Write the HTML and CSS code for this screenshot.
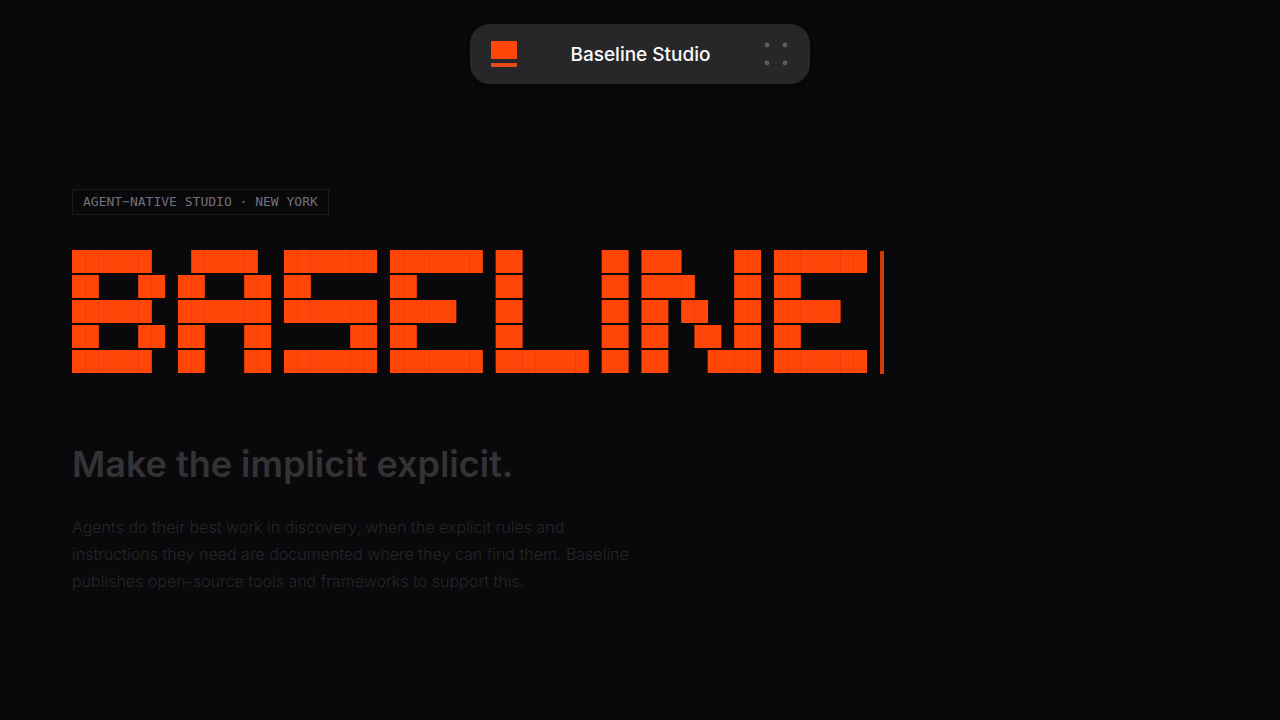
FILE: index.html
```html
<!DOCTYPE html>
<html lang="en">
<head>
    <meta charset="UTF-8">
    <meta name="viewport" content="width=device-width, initial-scale=1.0">
    <title>Baseline Studio</title>
    <link rel="stylesheet" href="styles.css">
</head>
<body>
    <header class="header">
        <nav class="nav">
            <a href="#" class="logo" aria-label="Home">
                <svg width="26" height="26" viewBox="0 0 26 26">
                    <rect width="26" height="18" fill="#ff4507"/>
                    <rect y="22" width="26" height="4" fill="#e64a19"/>
                </svg>
            </a>
            <a href="#" class="site-name">Baseline Studio</a>
            <button type="button" class="menu-button" aria-label="Open menu">
                <svg width="24" height="24" viewBox="0 0 24 24" fill="#5c5c60">
                    <circle cx="3" cy="3" r="2.4"/>
                    <circle cx="21" cy="3" r="2.4"/>
                    <circle cx="3" cy="21" r="2.4"/>
                    <circle cx="21" cy="21" r="2.4"/>
                </svg>
            </button>
        </nav>
    </header>

    <main class="hero">
        <p class="label">AGENT−NATIVE STUDIO · NEW YORK</p>
        <div class="banner">
<pre class="wordmark" role="img" aria-label="Baseline">
██████   █████  ███████ ███████ ██      ██ ███    ██ ███████
██   ██ ██   ██ ██      ██      ██      ██ ████   ██ ██
██████  ███████ ███████ █████   ██      ██ ██ ██  ██ █████
██   ██ ██   ██      ██ ██      ██      ██ ██  ██ ██ ██
██████  ██   ██ ███████ ███████ ███████ ██ ██   ████ ███████</pre>
            <span class="cursor"></span>
        </div>
        <h1>Make the implicit explicit.</h1>
        <p class="intro">Agents do their best work in discovery, when the explicit rules and instructions they need are documented where they can find them. Baseline publishes open-source tools and frameworks to support this.</p>
    </main>
</body>
</html>
```
FILE: styles.css
```css
body {
    margin: 0;
    min-height: 100vh;
    background: #09090b;
    color: #fafafa;
    font-family: Inter, "Liberation Sans", sans-serif;
}
.header {
    display: flex;
    justify-content: center;
    padding: 24px 24px 0;
}
.nav {
    display: flex;
    justify-content: space-between;
    align-items: center;
    width: 100%;
    max-width: 340px;
    height: 60px;
    padding: 0 22px 0 21px;
    border-radius: 20px;
    background: #27272a;
    box-shadow: 0 4px 16px rgba(0, 0, 0, 0.5);
    box-sizing: border-box;
}
.logo,
.menu-button {
    display: flex;
}
.site-name {
    color: #fafafa;
    font-size: 19px;
    font-weight: 500;
    text-decoration: none;
}
.menu-button {
    padding: 0;
    border: none;
    background: none;
    cursor: pointer;
}
.hero {
    padding: 105px 72px 72px;
}
.label {
    width: fit-content;
    margin: 0 0 34px;
    padding: 0 10px;
    border: 1px solid #1c1c1f;
    color: #71717a;
    font-family: "DejaVu Sans Mono", monospace;
    font-size: 13px;
    line-height: 24px;
}
.banner {
    display: flex;
    align-items: flex-end;
    gap: 13px;
}
/* the mask leaves a thin gap between the rows of blocks */
.wordmark {
    margin: 0;
    color: #ff4507;
    font-family: "DejaVu Sans Mono", monospace;
    font-size: 22px;
    line-height: 25px;
    -webkit-mask-image: repeating-linear-gradient(transparent 0 1px, #000 1px 24px, transparent 24px 25px);
    mask-image: repeating-linear-gradient(transparent 0 1px, #000 1px 24px, transparent 24px 25px);
}
.cursor {
    width: 4px;
    height: 123px;
    background: #cf3c0a;
}
h1 {
    margin: 68px 0 0;
    color: #333336;
    font-size: 36px;
    font-weight: 600;
    line-height: 44px;
}
.intro {
    max-width: 576px;
    margin: 28px 0 0;
    color: #252528;
    font-size: 16px;
    font-weight: 300;
    line-height: 27px;
}
```
